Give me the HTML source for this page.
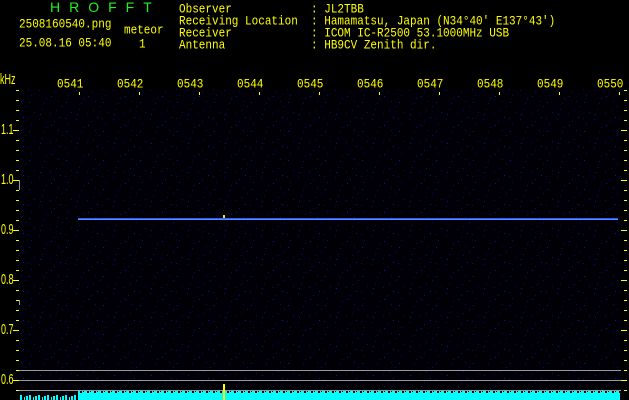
<!DOCTYPE html>
<html><head><style>
body{margin:0;background:#000;width:629px;height:400px;overflow:hidden;position:relative;font-family:"Liberation Mono","DejaVu Sans Mono",monospace;}
.t{position:absolute;color:#ffff00;font-size:11px;line-height:12px;white-space:pre;transform:scaleY(1.2);transform-origin:left top;}
.y{position:absolute;color:#ffff00;font-size:15px;line-height:15px;white-space:pre;font-family:"Liberation Sans",sans-serif;transform:scaleX(0.6);transform-origin:left top;}
</style></head><body>
<svg width="629" height="400" style="position:absolute;left:0;top:0">
<defs>
<pattern id="n" width="37" height="29" patternUnits="userSpaceOnUse">
<rect width="37" height="29" fill="#000006"/>
<g fill="#0c0c70">
<rect x="2" y="3" width="1" height="1"/><rect x="9" y="11" width="1" height="1"/><rect x="17" y="5" width="1" height="1"/><rect x="25" y="19" width="1" height="1"/><rect x="31" y="8" width="1" height="1"/><rect x="5" y="22" width="1" height="1"/><rect x="13" y="26" width="1" height="1"/><rect x="21" y="14" width="1" height="1"/><rect x="34" y="25" width="1" height="1"/><rect x="28" y="2" width="1" height="1"/><rect x="7" y="16" width="1" height="1"/><rect x="19" y="23" width="1" height="1"/>
</g>
<g fill="#1414a8">
<rect x="14" y="9" width="1" height="1"/><rect x="29" y="15" width="1" height="1"/><rect x="3" y="27" width="1" height="1"/><rect x="23" y="1" width="1" height="1"/>
</g>
</pattern>
<pattern id="c" width="7" height="9" patternUnits="userSpaceOnUse" x="78" y="391">
<rect width="7" height="9" fill="#00ffff"/><rect x="2" y="0" width="2" height="2" fill="#000"/><rect x="5" y="0" width="1" height="1" fill="#000"/>
</pattern>
<pattern id="c2" width="9" height="9" patternUnits="userSpaceOnUse" x="20" y="391">
<rect x="0" y="4" width="2" height="5" fill="#00ffff"/><rect x="4" y="6" width="1" height="3" fill="#00ffff"/><rect x="6" y="5" width="2" height="4" fill="#00ffff"/>
</pattern>
</defs>
<rect x="19" y="89" width="602" height="311" fill="url(#n)"/>
<rect x="78" y="218" width="540" height="2" fill="#2a5cff"/>
<rect x="78" y="219" width="540" height="1" fill="#6aa0ff" opacity="0.7"/>
<rect x="223" y="215" width="2" height="3" fill="#ffd040"/>
<g fill="#9a9a9a"><rect x="19" y="370" width="602" height="1"/><rect x="19" y="380" width="602" height="1"/><rect x="19" y="390" width="602" height="1"/><rect x="19" y="180" width="1" height="10"/><rect x="19" y="300" width="1" height="5"/></g>
<rect x="78" y="391" width="542" height="9" fill="url(#c)"/>
<rect x="20" y="391" width="58" height="9" fill="url(#c2)"/>
<rect x="223" y="384" width="2" height="16" fill="#ffff00"/>
<g fill="#ffff00" id="tk">
<rect x="16" y="90" width="3" height="1"/><rect x="16" y="100" width="3" height="1"/><rect x="16" y="110" width="3" height="1"/><rect x="16" y="120" width="3" height="1"/><rect x="13" y="130" width="6" height="1"/>
<rect x="16" y="140" width="3" height="1"/><rect x="16" y="150" width="3" height="1"/><rect x="16" y="160" width="3" height="1"/><rect x="16" y="170" width="3" height="1"/><rect x="13" y="180" width="6" height="1"/>
<rect x="16" y="190" width="3" height="1"/><rect x="16" y="200" width="3" height="1"/><rect x="16" y="210" width="3" height="1"/><rect x="16" y="220" width="3" height="1"/><rect x="13" y="230" width="6" height="1"/>
<rect x="16" y="240" width="3" height="1"/><rect x="16" y="250" width="3" height="1"/><rect x="16" y="260" width="3" height="1"/><rect x="16" y="270" width="3" height="1"/><rect x="13" y="280" width="6" height="1"/>
<rect x="16" y="290" width="3" height="1"/><rect x="16" y="300" width="3" height="1"/><rect x="16" y="310" width="3" height="1"/><rect x="16" y="320" width="3" height="1"/><rect x="13" y="330" width="6" height="1"/>
<rect x="16" y="340" width="3" height="1"/><rect x="16" y="350" width="3" height="1"/><rect x="16" y="360" width="3" height="1"/><rect x="16" y="370" width="3" height="1"/><rect x="13" y="380" width="6" height="1"/><rect x="16" y="390" width="3" height="1"/>
</g>
<use href="#tk" x="608"/>
<g fill="#ffff00">
<rect x="79" y="92" width="1" height="3"/><rect x="139" y="92" width="1" height="3"/><rect x="199" y="92" width="1" height="3"/><rect x="259" y="92" width="1" height="3"/><rect x="319" y="92" width="1" height="3"/><rect x="379" y="92" width="1" height="3"/><rect x="439" y="92" width="1" height="3"/><rect x="499" y="92" width="1" height="3"/><rect x="559" y="92" width="1" height="3"/><rect x="619" y="92" width="1" height="3"/>
</g>
</svg>
<div class="t" style="left:50px;top:1px;color:#22ee22;font-size:14px;letter-spacing:9px;font-family:'Liberation Sans',sans-serif;transform:none">HROFFT</div>
<div class="t" style="left:19px;top:18px">2508160540.png</div>
<div class="t" style="left:19px;top:37px">25.08.16 05:40</div>
<div class="t" style="left:124px;top:24px">meteor</div>
<div class="t" style="left:139px;top:38px">1</div>
<div class="t" style="left:179px;top:3px">Observer            : JL2TBB</div>
<div class="t" style="left:179px;top:15px">Receiving Location  : Hamamatsu, Japan (N34°40' E137°43')</div>
<div class="t" style="left:179px;top:27px">Receiver            : ICOM IC-R2500 53.1000MHz USB</div>
<div class="t" style="left:179px;top:39px">Antenna             : HB9CV Zenith dir.</div>
<div class="y" style="left:0px;top:72px">kHz</div>
<div class="t" style="left:57px;top:78px">0541</div><div class="t" style="left:117px;top:78px">0542</div><div class="t" style="left:177px;top:78px">0543</div><div class="t" style="left:237px;top:78px">0544</div><div class="t" style="left:297px;top:78px">0545</div><div class="t" style="left:357px;top:78px">0546</div><div class="t" style="left:417px;top:78px">0547</div><div class="t" style="left:477px;top:78px">0548</div><div class="t" style="left:537px;top:78px">0549</div><div class="t" style="left:597px;top:78px">0550</div>
<div class="y" style="left:1px;top:122px">1.1</div><div class="y" style="left:1px;top:172px">1.0</div><div class="y" style="left:1px;top:222px">0.9</div><div class="y" style="left:1px;top:272px">0.8</div><div class="y" style="left:1px;top:322px">0.7</div><div class="y" style="left:1px;top:372px">0.6</div>
</body></html>
